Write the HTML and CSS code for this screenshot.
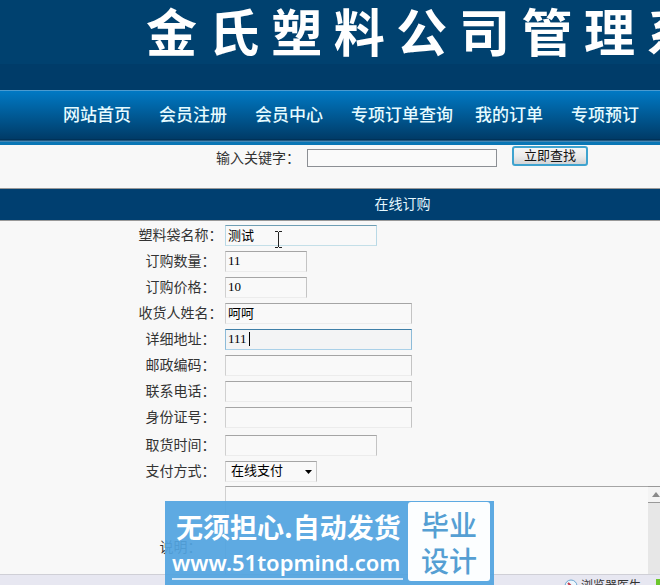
FILE: index.html
```
<!DOCTYPE html>
<html lang="zh-CN">
<head>
    <meta charset="utf-8">
    <title>在线订购</title>
    <link rel="stylesheet" href="styles.css">
</head>
<body>
    <div class="banner">
        <h1>金 氏 塑 料 公 司 管 理 系 统</h1>
    </div>
    <ul class="nav">
        <li><a href="#">网站首页</a></li>
        <li><a href="#">会员注册</a></li>
        <li><a href="#">会员中心</a></li>
        <li><a href="#">专项订单查询</a></li>
        <li><a href="#">我的订单</a></li>
        <li><a href="#">专项预订</a></li>
    </ul>

    <form class="search">
        <label for="keyword">输入关键字：</label>
        <input type="text" id="keyword">
        <button type="button">立即查找</button>
    </form>

    <h2 class="title">在线订购</h2>

    <form class="order">
        <div class="row">
            <label for="name">塑料袋名称：</label>
            <div class="field">
                <input class="medium hover" type="text" id="name" value="测试">
                <svg class="pointer" width="9" height="17" viewBox="0 0 9 17" fill="none" stroke="#222">
                    <path d="M1 .5H4M5 .5H8M4.500 1V16M1 16.500H4M5 16.500H8"/>
                </svg>
            </div>
        </div>
        <div class="row">
            <label for="count">订购数量：</label>
            <input class="short" type="text" id="count" value="11">
        </div>
        <div class="row">
            <label for="price">订购价格：</label>
            <input class="short" type="text" id="price" value="10">
        </div>
        <div class="row">
            <label for="receiver">收货人姓名：</label>
            <input class="long" type="text" id="receiver" value="呵呵">
        </div>
        <div class="row">
            <label for="address">详细地址：</label>
            <div class="field">
                <input class="long focus" type="text" id="address" value="111">
                <span class="caret"></span>
            </div>
        </div>
        <div class="row">
            <label for="zip">邮政编码：</label>
            <input class="long" type="text" id="zip">
        </div>
        <div class="row">
            <label for="phone">联系电话：</label>
            <input class="long" type="text" id="phone">
        </div>
        <div class="row tall">
            <label for="idcard">身份证号：</label>
            <input class="long" type="text" id="idcard">
        </div>
        <div class="row">
            <label for="time">取货时间：</label>
            <input class="medium" type="text" id="time">
        </div>
        <div class="row">
            <label for="pay">支付方式：</label>
            <div class="field">
                <select id="pay">
                    <option>在线支付</option>
                </select>
                <svg class="arrow" width="7" height="4" viewBox="0 0 7 4"><path d="M0 0H7L3.500 4Z"/></svg>
            </div>
        </div>
        <div class="row note">
            <label for="note">说明：</label>
            <textarea id="note"></textarea>
            <div class="scroll">
                <svg width="8" height="5" viewBox="0 0 8 5"><path d="M0 5L4 0L8 5Z" fill="#8a8a8a"/></svg>
            </div>
        </div>
    </form>

    <div class="status">
        <svg width="14" height="12" viewBox="0 0 14 12" fill="none">
            <circle cx="7" cy="7" r="6" fill="#eef6fc" stroke="#6ba6d2"/>
            <path d="M4 4L9 9" stroke="#c33b4a" stroke-width="2"/>
        </svg>
        <span>浏览器医生</span>
        <i class="green"></i>
    </div>

    <div class="ad">
        <div class="ad-text">
            <p>无须担心.自动发货</p>
            <a href="#">www.51topmind.com</a>
        </div>
        <div class="ad-box">毕业<br>设计</div>
    </div>
</body>
</html>
```
FILE: styles.css
```
* {
    box-sizing: border-box;
}
body {
    margin: 0;
    height: 100vh;
    display: flex;
    flex-direction: column;
    position: relative;
    overflow: hidden;
    background: #f8f8f8;
    color: #333;
    font-family: "Liberation Serif", "Noto Sans CJK SC", sans-serif;
    font-size: 14px;
}
.banner {
    flex: none;
    height: 90px;
    padding-left: 146px;
    overflow: hidden;
    background: linear-gradient(#00416f 64px, #003c69 64px);
}
h1 {
    margin: 0;
    color: #fff;
    font: bold 51px/60px "Noto Sans CJK SC", sans-serif;
    white-space: nowrap;
}
.nav {
    flex: none;
    display: flex;
    height: 55px;
    margin: 0;
    padding: 0 0 0 63px;
    list-style: none;
    border-top: 1px solid #4a9bd0;
    border-bottom: 3px solid #0a76b5;
    background: linear-gradient(#0079c4, #003b67 48px, #00294a 49px, #4387b5 50px);
}
.nav li {
    flex: none;
    min-width: 96px;
    padding-right: 22px;
}
.nav a {
    color: #e6fbff;
    font-size: 17px;
    font-weight: 500;
    line-height: 49px;
    text-decoration: none;
    white-space: nowrap;
}
.search {
    flex: none;
    display: flex;
    align-items: flex-start;
    height: 43px;
    padding: 1px 0 0 216px;
}
.search label {
    width: 91px;
    line-height: 25px;
}
.search input {
    width: 190px;
    height: 18px;
    margin: 3px 15px 0 0;
    border: 1px solid #8c8f94;
    background: #fafafa;
}
.search button {
    width: 76px;
    height: 20px;
    padding: 0 0 2px;
    border: 2px solid #3fa3cf;
    border-radius: 3px;
    background: linear-gradient(#f6f6f6, #ececec 50%, #d2d4d6);
    color: #111;
    font: 13px/14px "Noto Sans CJK SC", sans-serif;
}
.title {
    flex: none;
    margin: 0;
    padding-left: 22%;
    border: 1px solid #999;
    border-width: 1px 0;
    background: #003f70;
    color: #e6f8ff;
    font-size: 14px;
    font-weight: normal;
    line-height: 31px;
    text-align: center;
}
.order {
    flex: 1;
    min-height: 0;
    padding-top: 4px;
    overflow: hidden;
}
.row {
    display: flex;
    align-items: flex-start;
    height: 26px;
}
.row.tall {
    height: 28px;
}
.row label {
    flex: none;
    width: 225px;
    padding-left: 136px;
    line-height: 21px;
    text-align: center;
    white-space: nowrap;
}
.row input,
.row select,
.row textarea {
    display: block;
    height: 21px;
    padding: 0 2px 2px;
    border: 1px solid #d4d4d4;
    border-color: #a5a5a5 #c4c4c4 #ececec #d0d0d0;
    border-radius: 0;
    background: #f9f9f9;
    color: #000;
    font: 13px/17px "Liberation Serif", "Noto Sans CJK SC", sans-serif;
    outline: none;
}
.row .short {
    width: 82px;
}
.row .medium {
    width: 152px;
}
.row .long {
    width: 187px;
}
.row .hover {
    border-color: #6e9eb4 #b9d9e6 #c4dfe8;
}
.row .focus {
    border-color: #3f7fa8 #8dbbd8 #a9d0e8;
    background: #f3f4f5;
}
.field {
    position: relative;
}
.pointer {
    position: absolute;
    left: 49px;
    top: 6px;
}
.caret {
    position: absolute;
    left: 24px;
    top: 3px;
    width: 1px;
    height: 14px;
    background: #000;
}
.row select {
    width: 92px;
    padding: 0 5px 2px;
    appearance: none;
}
.arrow {
    position: absolute;
    right: 5px;
    top: 9px;
    pointer-events: none;
}
.row.note {
    height: 124px;
    align-items: stretch;
    margin-top: -1px;
}
.note label {
    line-height: 124px;
}
.row textarea {
    flex: 1;
    height: auto;
    border-right: 0;
    resize: none;
}
.scroll {
    flex: none;
    width: 12px;
    padding: 5px 0 0 4px;
    border-top: 1px solid #999;
    background: linear-gradient(#f4f4f4 15px, #999 15px, #999 16px, #e7e7e7 16px);
}
.scroll svg {
    display: block;
}
.status {
    flex: none;
    display: flex;
    justify-content: flex-end;
    gap: 3px;
    height: 11px;
    padding-top: 4px;
    overflow: hidden;
    border-top: 1px solid #cfcfd6;
    background: #e7e7f1;
    font-size: 12px;
    line-height: 14px;
}
.status svg,
.status i {
    flex: none;
}
.green {
    width: 4px;
    height: 12px;
    margin-left: 12px;
    background: #6cc62c;
}
.ad {
    position: absolute;
    left: 25%;
    bottom: 0;
    display: flex;
    width: 329px;
    height: 84px;
    padding: 1px 4px 4px 7px;
    background: rgba(82, 164, 224, 0.93);
    color: #fff;
}
.ad-text {
    flex: 1;
    white-space: nowrap;
}
.ad p {
    margin: 6px 0 0 4px;
    font: bold 27px/38px "Noto Sans CJK SC", sans-serif;
}
.ad a {
    display: block;
    width: 231px;
    border-bottom: 2px solid #cfe6f8;
    color: #fff;
    font: 600 22px/32px "Noto Sans", sans-serif;
    text-decoration: none;
}
.ad-box {
    width: 82px;
    padding-top: 4px;
    border-radius: 3px;
    background: #fcfeff;
    color: #559fd3;
    font: 500 28px/36px "Noto Sans CJK SC", sans-serif;
    text-align: center;
}
```
